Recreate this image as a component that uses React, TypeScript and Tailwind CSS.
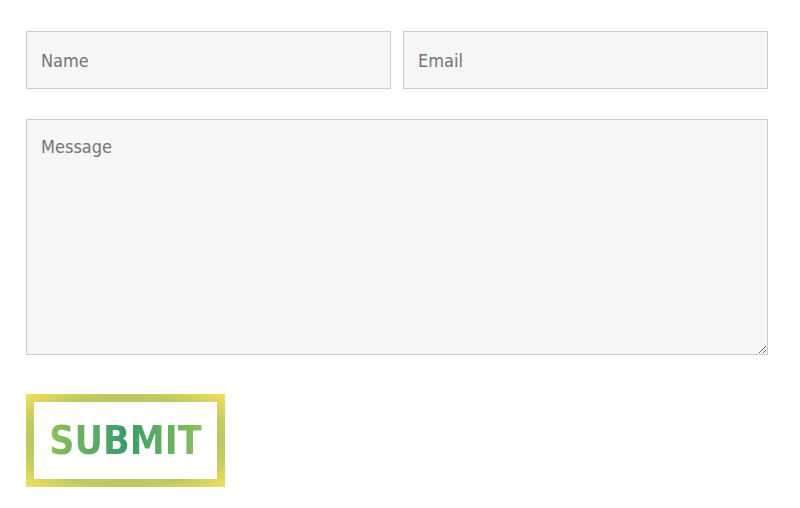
export default function App() {
  return (
    <div className="w-[800px] h-[508px] bg-white px-[26px] pt-[31px] font-['DejaVu_Sans_Condensed','DejaVu_Sans',sans-serif] [font-stretch:condensed]">
      <form className="flex flex-col w-[742px]" onSubmit={(e) => e.preventDefault()}>
        <div className="flex gap-[12px]">
          <input
            type="text"
            placeholder="Name"
            className="flex-1 h-[58px] px-[14px] bg-[#f6f6f6] border border-[#cccccc] text-[18px] text-[#555] placeholder:text-[#757575] outline-none"
          />
          <input
            type="email"
            placeholder="Email"
            className="flex-1 h-[58px] px-[14px] bg-[#f6f6f6] border border-[#cccccc] text-[18px] text-[#555] placeholder:text-[#757575] outline-none"
          />
        </div>
        <textarea
          placeholder="Message"
          className="mt-[30px] h-[236px] px-[14px] py-[16px] bg-[#f6f6f6] border border-[#cccccc] text-[18px] leading-[22px] text-[#555] placeholder:text-[#757575] outline-none resize"
        />
        {/* gradient border button */}
        <div className="mt-[39px] w-[199px] h-[93px] p-[8px] bg-[radial-gradient(ellipse_at_center,#b0c460_0%,#c0c862_70%,#f3e05c_100%)]">
          <button
            type="submit"
            className="w-full h-full bg-white flex items-center justify-center"
          >
            <span className="text-[39px] font-bold leading-none bg-[linear-gradient(to_right,#8dc15a,#3c9a6b,#8dc15a)] bg-clip-text text-transparent">
              SUBMIT
            </span>
          </button>
        </div>
      </form>
    </div>
  )
}
